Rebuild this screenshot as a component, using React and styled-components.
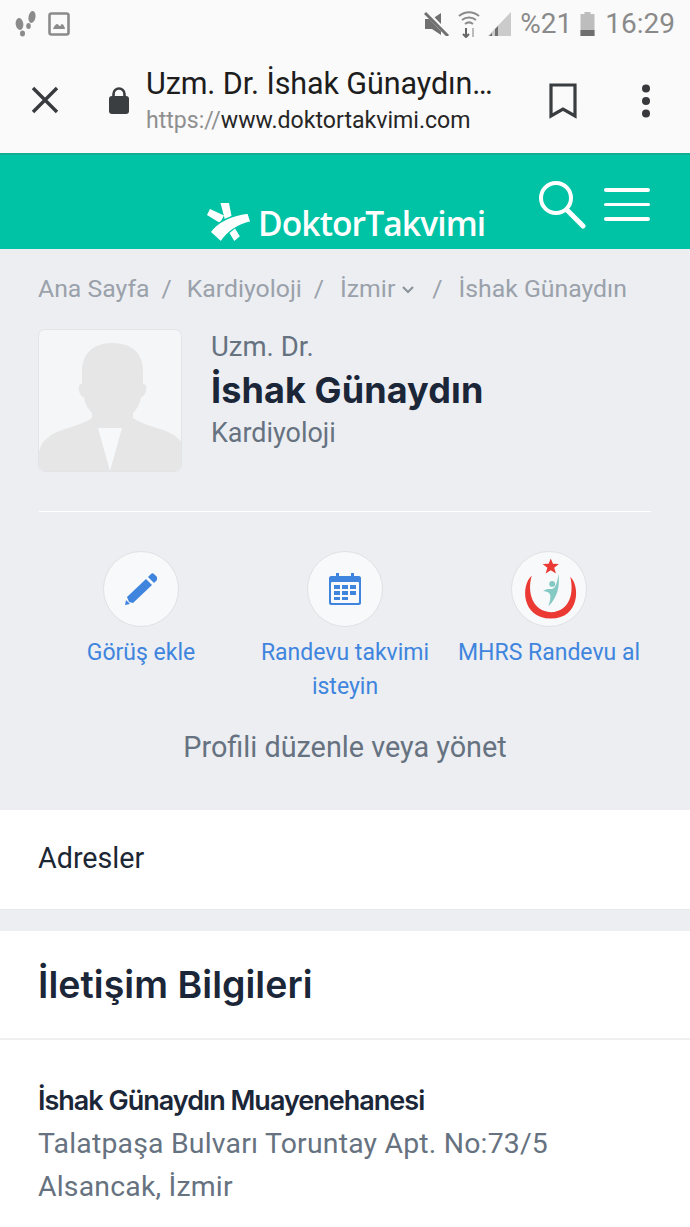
import React from "react";
import styled, { createGlobalStyle } from "styled-components";

const Global = createGlobalStyle`
  html, body { margin: 0; padding: 0; background: #fff; }
  * { box-sizing: border-box; }
  body { font-family: Roboto, "Liberation Sans", sans-serif; overflow: hidden; }
`;
const Page = styled.div`width: 690px; height: 1227px; overflow: hidden; background: #fff;`;
const Chrome = styled.header`height: 153px; background: #fafafa; display: flex; flex-direction: column;`;
const StatusBar = styled.div`height: 48px; padding: 0 15px; display: flex; align-items: center; justify-content: space-between; color: #8b8b8b;`;
const StatusGroup = styled.div`display: flex; align-items: center; gap: ${p => p.$gap || 8}px;`;
const StatusText = styled.span`font-size: ${p => p.$size}px; color: #8a8a8a; line-height: 1; margin-left: ${p => p.$left || 0}px;`;
const BrowserBar = styled.div`flex: 1; display: flex; align-items: center; padding: 0 30px 2px 30px;`;
const CloseSlot = styled.div`width: 78px; display: flex;`;
const LockSlot = styled.div`width: 38px; display: flex; padding-top: 1px;`;
const UrlBlock = styled.div`flex: 1; display: flex; flex-direction: column; gap: 6px; margin-top: 3px;`;
const PageTitle = styled.div`font-size: 30.5px; line-height: 34px; color: #1d1d1d; letter-spacing: -0.1px; white-space: nowrap;`;
const PageUrl = styled.div`font-size: 23.1px; line-height: 28px; color: #262626; span { color: #8f8f8f; }`;
const BarActions = styled.div`display: flex; align-items: center; gap: 64px; margin-right: 9px; padding-top: 3px;`;

const GreenBar = styled.div`height: 96px; background: #00c3a5; border-top: 2px solid #14ad94; display: flex; padding: 0 40px 0 206px; justify-content: space-between;`;
const Logo = styled.div`display: flex; align-items: center; gap: 7px; margin-top: 48px; height: 40px;`;
const LogoText = styled.span`color: #fff; font-family: "Open Sans", Lato, sans-serif; font-weight: 600; font-size: 33.6px; letter-spacing: -0.9px; line-height: 40px;`;
const HeaderIcons = styled.div`display: flex; gap: 18px; align-items: flex-start; padding-top: 26px;`;
const Burger = styled.div`width: 46px; display: flex; flex-direction: column; gap: 11px; padding-top: 7px;`;
const BurgerLine = styled.i`display: block; height: 3.5px; background: #fff; border-radius: 2px;`;

const Profile = styled.section`height: 561px; background: #eceef2; padding: 0 38px;`;
const Crumbs = styled.nav`height: 80px; padding: 24px 0 0; display: flex; align-items: flex-start; font-size: 24.8px; line-height: 32px; color: #9aa1aa; white-space: nowrap;`;
const CrumbSep = styled.span`margin: 0 ${p => p.$r || 15}px 0 ${p => p.$l || 12}px;`;
const Chevron = styled.svg`margin: 10px 0 0 6px;`;
const ProfileHead = styled.div`display: flex; gap: 29px; height: 143px;`;
const Avatar = styled.div`width: 144px; height: 143px; border-radius: 7px; background: #f5f6f7; border: 1px solid #e2e4e7; overflow: hidden;`;
const Identity = styled.div`display: flex; flex-direction: column; padding-top: 1px;`;
const Title = styled.div`font-size: 27.5px; line-height: 34px; color: #667280;`;
const Name = styled.h1`margin: 4px 0 5px; font-family: Inter, sans-serif; font-weight: 700; font-size: 36px; line-height: 44px; color: #1b2738; letter-spacing: 0.1px;`;
const Specialty = styled.div`font-size: 26.9px; line-height: 32px; color: #667280;`;
const Divider = styled.hr`margin: 39px 1px 0; border: 0; height: 1px; background: #fff;`;
const Actions = styled.div`display: grid; grid-template-columns: 204px 204px 204px; margin: 39px 0 0 1px;`;
const Action = styled.a`display: flex; flex-direction: column; align-items: center; text-align: center; color: #3f85de; font-size: 23px; line-height: 34px;`;
const Circle = styled.div`width: 76px; height: 76px; border-radius: 50%; background: #f8f9fb; border: 1.5px solid #dfe1e4; display: flex; align-items: center; justify-content: center; margin-bottom: 9px;`;
const Manage = styled.div`text-align: center; font-size: 28.8px; line-height: 34px; color: #667280; margin: 26px 0 0;`;

const AddressBar = styled.div`height: 100px; background: #fff; padding: 31px 38px 0; font-size: 28.7px; line-height: 34px; color: #1c2734; border-bottom: 1px solid #e6e8eb;`;
const Gap = styled.div`height: 21px; background: #eceef2;`;
const ContactHead = styled.div`height: 109px; padding: 31px 38px 0; border-bottom: 2px solid #eeeff1;`;
const ContactTitle = styled.h2`margin: 0; font-family: Inter, sans-serif; font-weight: 600; font-size: 37.5px; line-height: 46px; color: #1b2738; letter-spacing: 0.05px;`;
const ContactBody = styled.div`padding: 42px 38px 0;`;
const Clinic = styled.div`font-family: Inter, sans-serif; font-weight: 600; font-size: 27px; line-height: 38px; color: #1b2738; letter-spacing: -1px; margin-bottom: 2px;`;
const AddressLine = styled.div`font-size: 28.4px; line-height: 43px; color: #667280; letter-spacing: 0.2px;`;

const Steps = () => (
  <svg width="24" height="28" viewBox="0 0 24 28" fill="#8b8b8b">
    <ellipse cx="4.500" cy="14" rx="3.800" ry="6" transform="rotate(-8 4.500 14)" /><ellipse cx="7.500" cy="23.500" rx="2.500" ry="3" />
    <ellipse cx="17" cy="7" rx="3.500" ry="6" transform="rotate(10 17 7)" /><ellipse cx="13.500" cy="16" rx="2.300" ry="3" />
  </svg>
);
const Pic = () => (
  <svg width="22" height="24" viewBox="0 0 22 24" fill="none">
    <rect x="1.500" y="1.500" width="19" height="21" rx="2" stroke="#8b8b8b" strokeWidth="2.600" />
    <path d="M5 17c1-3 3-5 4-5s2 2 3 2 1-2 2-2 3 3 3 5z" fill="#8b8b8b" />
  </svg>
);
const Mute = () => (
  <svg width="26" height="24" viewBox="0 0 26 24" fill="#707070">
    <path d="M1 7h7l9-6v22l-9-6H1z" />
    <path d="M2 0l22 23" stroke="#fafafa" strokeWidth="5" />
    <path d="M1 1l23 23" stroke="#707070" strokeWidth="3" />
  </svg>
);
const Wifi = () => (
  <svg width="22" height="28" viewBox="0 0 22 28" fill="none" stroke="#8b8b8b" strokeWidth="2">
    <path d="M1 6c6-5 14-5 20 0M4 10c4-3.500 10-3.500 14 0M7 14c2.500-2 5.500-2 8 0" />
    <path d="M8 18v9M5 24l3 3 3-3" stroke="#666" />
    <path d="M15 27v-9" stroke="#bbb" />
  </svg>
);
const Signal = () => (
  <svg width="24" height="26" viewBox="0 0 24 26">
    <path d="M0 25L23 1v24z" fill="#cbcbcb" />
    <path d="M1 25l3-3v3zM7 25v-7l3-3v10z" fill="#707070" />
  </svg>
);
const Battery = () => (
  <svg width="15" height="24" viewBox="0 0 15 24">
    <path d="M4.500 0h6v2h4v22H0.500V2h4z" fill="#bdbdbd" />
    <rect x="0.500" y="18" width="14" height="6" fill="#6f6f6f" />
  </svg>
);
const CloseIcon = () => (
  <svg width="30" height="30" viewBox="0 0 30 30"><path d="M3 3l24 24M27 3L3 27" stroke="#383b3e" strokeWidth="3.400" /></svg>
);
const LockIcon = () => (
  <svg width="22" height="28" viewBox="0 0 22 28">
    <path d="M5.500 11V8a5.500 5.500 0 0111 0v3" fill="none" stroke="#3b3e41" strokeWidth="2.600" />
    <rect x="1" y="10" width="20" height="18" rx="3" fill="#3b3e41" />
  </svg>
);
const Bookmark = () => (
  <svg width="28" height="36" viewBox="0 0 28 36"><path d="M2 2h24v31L14 26 2 33z" fill="none" stroke="#3a3d40" strokeWidth="3.200" /></svg>
);
const Dots = () => (
  <svg width="10" height="34" viewBox="0 0 10 34" fill="#37393c"><circle cx="5" cy="4.500" r="4" /><circle cx="5" cy="17" r="4" /><circle cx="5" cy="29.500" r="4" /></svg>
);
const LogoMark = () => (
  <svg width="45" height="40" viewBox="-1 0 45 40" fill="#fff">
    <path d="M13.500 0H22l2.500 13-6.500 4z" />
    <path d="M0 12l3-6 14 6.500-4 7.500z" />
    <path d="M3 29C11 18 26 12 41 10l3 9C31 22 21 28 14 39z" stroke="#00c3a5" strokeWidth="1.400" />
    <path d="M22.500 30l5.500-4.500 4.800 7.800-5.500 4.700z" />
  </svg>
);
const SearchIcon = () => (
  <svg width="48" height="48" viewBox="0 0 48 48" fill="none" stroke="#fff">
    <circle cx="18" cy="17" r="15" strokeWidth="4" />
    <path d="M29 29l16 16" strokeWidth="5" strokeLinecap="round" />
  </svg>
);
const DownChevron = () => (
  <Chevron width="14" height="14" viewBox="0 0 14 14"><path d="M2 4l5 5 5-5" fill="none" stroke="#8d949d" strokeWidth="2.200" /></Chevron>
);
const Silhouette = () => (
  <svg width="142" height="141" viewBox="0 0 142 141" style={{ display: "block" }}>
    <path fill="#e6e6e6" d="M73 13c-20 0-30 12-30 28v13c-3 0-4 2-3 7 1 4 3 6 5 6 1 7 4 12 8 16v5c-5 4-20 9-30 12-12 4-21 11-23 22v19h146v-19c-1-11-10-18-22-22-10-3-25-8-30-12v-5c4-4 7-9 8-16 2 0 4-2 5-6 1-5 0-7-3-7V41c0-17-10-28-31-28z" />
    <path fill="#f7f8f9" d="M59 98h24l-12 43z" />
  </svg>
);
const Pencil = () => (
  <svg width="32" height="32" viewBox="0 0 32 32" fill="#3f85de">
    <path d="M2 24L21 6l6 6L8 30l-4-1z" /><path d="M23 4l3-3c1-1 2-1 3 0l3 3c1 1 1 2 0 3l-3 3z" /><path d="M1 27l4 4-5 1z" />
  </svg>
);
const Calendar = () => (
  <svg width="32" height="32" viewBox="0 0 32 32">
    <path fill="#3f85de" d="M2 3h5V0h3v3h12V0h3v3h5c1 0 2 1 2 2v25c0 1-1 2-2 2H2c-1 0-2-1-2-2V5c0-1 1-2 2-2z" />
    <rect x="2" y="9" width="28" height="21" rx="1" fill="#f8f9fb" />
    <g fill="#3f85de">
      <rect x="5" y="12" width="6" height="4" /><rect x="13" y="12" width="6" height="4" /><rect x="21" y="12" width="6" height="4" />
      <rect x="5" y="18" width="6" height="4" /><rect x="13" y="18" width="6" height="4" /><rect x="21" y="18" width="6" height="4" />
      <rect x="5" y="24" width="6" height="3" /><rect x="13" y="24" width="6" height="3" />
    </g>
  </svg>
);
const Mhrs = () => (
  <svg width="73" height="73" viewBox="0 0 74 74">
    <path fill="#ea3a33" d="M38.300 5.500l2.200 5.500 6 .2-4.700 3.800 1.700 5.800-5.200-3.400-5.200 3.400 1.700-5.800-4.700-3.800 6-.2z" />
    <path fill="#ea3a33" d="M19 23C8 32 8 66 38.500 66.500 68 66 68 33 58 24c4 16 0 35-19.500 36C20 59 14 40 19 23z" />
    <circle cx="39.700" cy="31.300" r="3" fill="#84c9c3" />
    <path fill="#84c9c3" d="M46 21c1.500 11 0 23-10 33 2-7 2.500-11 1-13-2-2-4-2-6.500-2.500C34 36 37 36.500 39.500 36.500 43 36 45 30 46 21z" />
  </svg>
);

export default function App() {
  return (
    <Page>
      <Global />
      <Chrome>
        <StatusBar>
          <StatusGroup $gap={9}><Steps /><Pic /></StatusGroup>
          <StatusGroup $gap={8}>
            <Mute /><Wifi /><Signal />
            <StatusText $size={28}>%21</StatusText><Battery />
            <StatusText $size={28} $left={2}>16:29</StatusText>
          </StatusGroup>
        </StatusBar>
        <BrowserBar>
          <CloseSlot><CloseIcon /></CloseSlot>
          <LockSlot><LockIcon /></LockSlot>
          <UrlBlock>
            <PageTitle>Uzm. Dr. İshak Günaydın…</PageTitle>
            <PageUrl><span>https://</span>www.doktortakvimi.com</PageUrl>
          </UrlBlock>
          <BarActions><Bookmark /><Dots /></BarActions>
        </BrowserBar>
      </Chrome>
      <GreenBar>
        <Logo><LogoMark /><LogoText>DoktorTakvimi</LogoText></Logo>
        <HeaderIcons>
          <SearchIcon />
          <Burger><BurgerLine /><BurgerLine /><BurgerLine /></Burger>
        </HeaderIcons>
      </GreenBar>
      <Profile>
        <Crumbs>
          <span>Ana Sayfa</span><CrumbSep>/</CrumbSep>
          <span>Kardiyoloji</span><CrumbSep $r={16}>/</CrumbSep>
          <span>İzmir</span><DownChevron /><CrumbSep $l={17} $r={16}>/</CrumbSep>
          <span>İshak Günaydın</span>
        </Crumbs>
        <ProfileHead>
          <Avatar><Silhouette /></Avatar>
          <Identity>
            <Title>Uzm. Dr.</Title>
            <Name>İshak Günaydın</Name>
            <Specialty>Kardiyoloji</Specialty>
          </Identity>
        </ProfileHead>
        <Divider />
        <Actions>
          <Action><Circle><Pencil /></Circle>Görüş ekle</Action>
          <Action><Circle><Calendar /></Circle>Randevu takvimi<br />isteyin</Action>
          <Action><Circle><Mhrs /></Circle>MHRS Randevu al</Action>
        </Actions>
        <Manage>Profili düzenle veya yönet</Manage>
      </Profile>
      <AddressBar>Adresler</AddressBar>
      <Gap />
      <ContactHead><ContactTitle>İletişim Bilgileri</ContactTitle></ContactHead>
      <ContactBody>
        <Clinic>İshak Günaydın Muayenehanesi</Clinic>
        <AddressLine>Talatpaşa Bulvarı Toruntay Apt. No:73/5</AddressLine>
        <AddressLine>Alsancak, İzmir</AddressLine>
      </ContactBody>
    </Page>
  );
}
